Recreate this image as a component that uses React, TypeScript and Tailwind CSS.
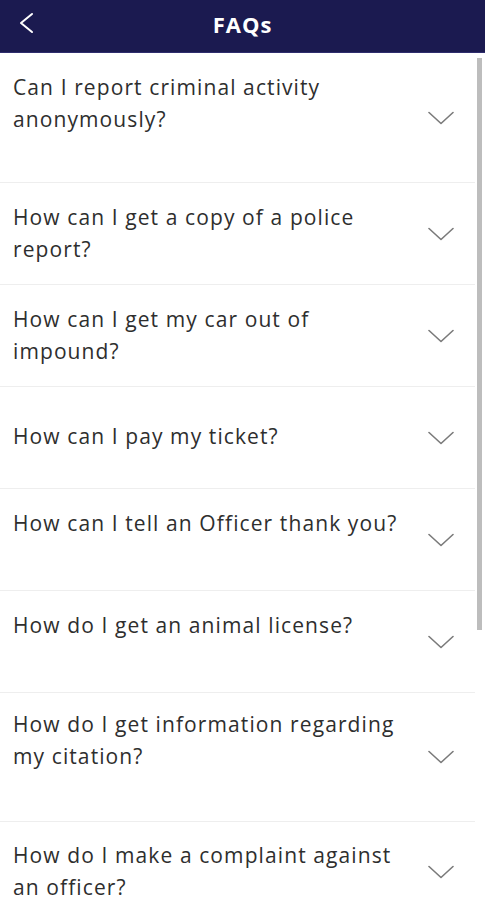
const faqs = [
  {
    q: 'Can I report criminal activity anonymously?',
    row: 'h-[130px]',
    text: 'pt-[18px]',
    chev: 'mt-[58px]',
  },
  {
    q: 'How can I get a copy of a police report?',
    row: 'h-[102px]',
    text: 'pt-[18px]',
    chev: 'mt-[44px]',
  },
  {
    q: 'How can I get my car out of impound?',
    row: 'h-[102px]',
    text: 'pt-[18px]',
    chev: 'mt-[44px]',
  },
  {
    q: 'How can I pay my ticket?',
    row: 'h-[102px]',
    text: 'pt-[33px]',
    chev: 'mt-[44px]',
  },
  {
    q: 'How can I tell an Officer thank you?',
    row: 'h-[102px]',
    text: 'pt-[18px]',
    chev: 'mt-[44px]',
  },
  {
    q: 'How do I get an animal license?',
    row: 'h-[102px]',
    text: 'pt-[18px]',
    chev: 'mt-[44px]',
  },
  {
    q: 'How do I get information regarding my citation?',
    row: 'h-[129px]',
    text: 'pt-[15px]',
    chev: 'mt-[57px]',
  },
  {
    q: 'How do I make a complaint against an officer?',
    row: 'h-[102px]',
    text: 'pt-[17px]',
    chev: 'mt-[43px]',
  },
];

function ChevronDown() {
  return (
    <svg width="26" height="14" viewBox="0 0 26 14" fill="none">
      <path d="M1 1.5 L13 12.5 L25 1.5" stroke="#7a7a7a" strokeWidth="1.6" strokeLinecap="round" strokeLinejoin="round" />
    </svg>
  );
}

export default function App() {
  return (
    <div className="relative w-[485px] h-[900px] overflow-hidden bg-white font-['Open_Sans','Noto_Sans',sans-serif]">
      {/* Header */}
      <div className="relative flex items-center justify-center h-[53px] bg-[#1b1a50] border-b border-[#2f2d6e]">
        <button className="absolute left-[18px] top-[12px]">
          <svg width="16" height="22" viewBox="0 0 16 22" fill="none">
            <path d="M14 2 L3 11 L14 20" stroke="#ffffff" strokeWidth="2" strokeLinecap="round" strokeLinejoin="round" />
          </svg>
        </button>
        <h1 className="text-white font-bold text-[22px] tracking-[1px] -mt-[3px]">FAQs</h1>
      </div>

      {/* List */}
      <div className="flex flex-col">
        {faqs.map((f) => (
          <div key={f.q} className={`flex items-start border-b border-[#eeeeee] mr-[10px] ${f.row}`}>
            <p className={`flex-1 pl-[13px] pr-[20px] text-[21px] tracking-[1.1px] leading-[32px] text-[#2e2e2e] ${f.text}`}>{f.q}</p>
            <div className={`w-[26px] mr-[21px] ${f.chev}`}>
              <ChevronDown />
            </div>
          </div>
        ))}
      </div>

      {/* Scrollbar */}
      <div className="absolute right-[3px] top-[58px] w-[5px] h-[572px] bg-[#bdbdbd]" />
    </div>
  );
}
